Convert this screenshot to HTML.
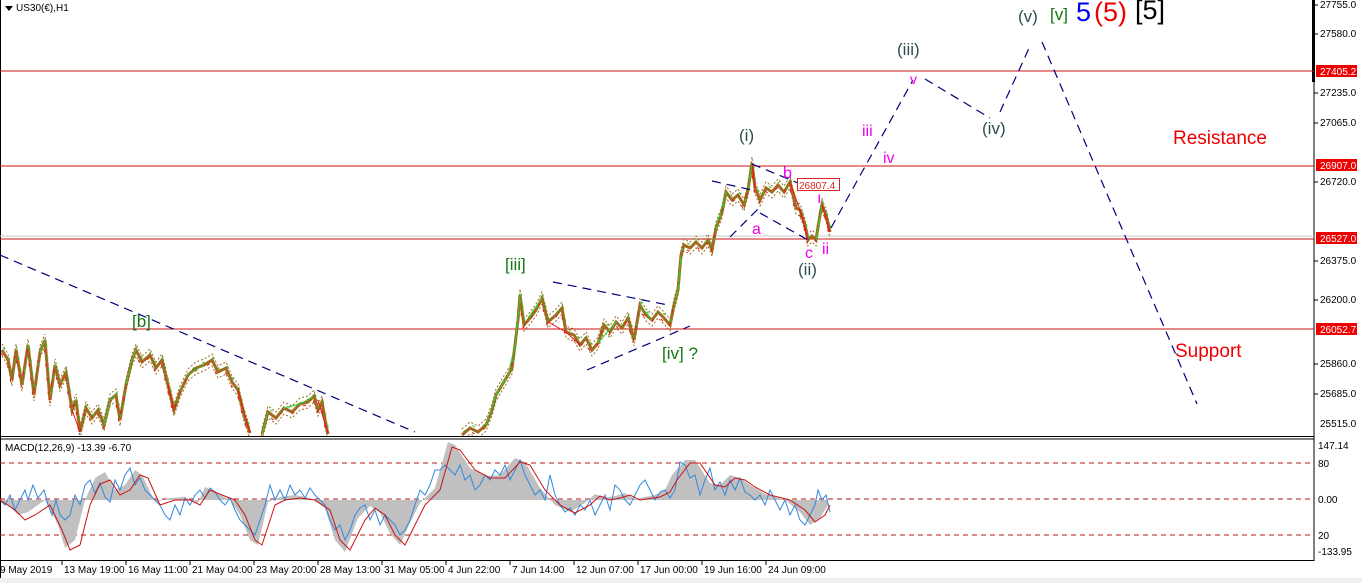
<!DOCTYPE html>
<html><head><meta charset="utf-8"><style>
html,body{margin:0;padding:0;background:#fff;}
body{width:1362px;height:583px;overflow:hidden;position:relative;font-family:"Liberation Sans",Tahoma,sans-serif;}
svg{position:absolute;left:0;top:0;}
</style></head><body>
<svg width="1362" height="583" viewBox="0 0 1362 583" xmlns="http://www.w3.org/2000/svg" font-family="Liberation Sans, sans-serif">
<defs><clipPath id="main"><rect x="1" y="0" width="1312" height="436"/></clipPath></defs>
<rect x="0" y="0" width="1362" height="583" fill="#fff"/>
<rect x="0" y="578" width="1362" height="5" fill="#f0f0f0"/>
<line x1="0.5" y1="0" x2="0.5" y2="578" stroke="#000"/>
<line x1="1314" y1="0" x2="1314" y2="561" stroke="#000"/>
<rect x="1312" y="0" width="3" height="82" fill="#000"/>
<line x1="0" y1="436.5" x2="1314" y2="436.5" stroke="#000"/>
<line x1="0" y1="439" x2="1314" y2="439" stroke="#000"/>
<line x1="0" y1="560.5" x2="1314" y2="560.5" stroke="#000"/>
<line x1="0" y1="71" x2="1314" y2="71" stroke="#cc1111"/>
<line x1="0" y1="166" x2="1314" y2="166" stroke="#cc1111"/>
<line x1="0" y1="236" x2="1314" y2="236" stroke="#c8c8c8"/>
<line x1="0" y1="239" x2="1314" y2="239" stroke="#cc1111"/>
<line x1="0" y1="329" x2="1314" y2="329" stroke="#cc1111"/>
<g fill="none" stroke-linejoin="round">
<path id="p1" d="M2,350 L8,360 L12,380 L16,350 L22,385 L28,345 L34,395 L40,352 L45,340 L50,400 L55,365 L60,385 L66,372 L72,410 L76,400 L80,432 L86,408 L92,418 L98,410 L104,425 L110,400 L116,395 L120,420 L126,385 L132,360 L136,350 L142,362 L150,355 L156,368 L162,360 L168,385 L174,410 L180,392 L188,375 L196,368 L204,365 L212,360 L218,372 L226,368 L232,382 L238,390 L244,415 L250,433"/>
<path id="p2" d="M262,434 L268,412 L276,418 L284,408 L292,412 L300,404 L308,402 L314,396 L318,410 L322,402 L326,425 L328,434"/>
<path id="p3" d="M462,435 L470,428 L478,432 L486,425 L492,410 L496,395 L502,385 L508,375 L512,368 L515,345 L518,320 L520,295 L524,325 L530,318 L536,310 L542,298 L548,322 L556,315 L562,308 L566,332 L574,335 L580,345 L586,338 L592,350 L598,343 L604,325 L610,332 L616,322 L622,328 L628,318 L634,340 L640,305 L646,315 L652,320 L658,312 L664,318 L670,325 L674,305 L678,290 L681,255 L684,245 L690,248 L696,242 L702,248 L708,240 L712,250 L716,228 L722,212 L726,192 L732,200 L738,195 L744,205 L748,190 L752,163 L755,188 L760,200 L766,188 L772,192 L778,185 L784,192 L790,182 L796,208 L800,210 L805,225 L808,240 L812,236 L816,240 L820,215 L822,205 L826,215 L830,232"/>
</g>
<g clip-path="url(#main)" fill="none">
<g stroke="#a06a20" stroke-width="1" stroke-dasharray="2,2">
<use href="#p1" transform="translate(0,-6)"/><use href="#p2" transform="translate(0,-6)"/><use href="#p3" transform="translate(0,-6)"/>
<use href="#p1" transform="translate(0,6)"/><use href="#p2" transform="translate(0,6)"/><use href="#p3" transform="translate(0,6)"/>
</g>
<g stroke="#a06a20" stroke-width="3">
<use href="#p1"/><use href="#p2"/><use href="#p3"/>
</g>
<g stroke="#33cc33" stroke-width="1" stroke-dasharray="3,9">
<use href="#p1" transform="translate(1,-3)"/><use href="#p2" transform="translate(1,-3)"/><use href="#p3" transform="translate(1,-3)"/>
</g>
<g stroke="#ee1111" stroke-width="1" stroke-dasharray="3,11">
<use href="#p1" transform="translate(-1,3)"/><use href="#p2" transform="translate(-1,3)"/><use href="#p3" transform="translate(-1,3)"/>
</g>
</g>
<g fill="none" stroke-width="1">
<path d="M40,352 L45,340 M104,425 L110,400 L116,395 M126,385 L132,360 L136,350 M186,376 L204,365 M262,434 L268,412 M284,408 L300,404 L314,396" stroke="#33cc33"/>
<path d="M72,410 L80,432 M168,385 L174,410 M238,390 L250,433 M318,400 L328,434" stroke="#ee1111"/>
<path d="M486,425 L496,395 L508,375 L515,345 L520,295 M528,318 L542,298 M598,343 L616,322 M640,305 L652,320 M674,305 L678,290 L681,255 M716,228 L726,192 M748,190 L752,163 M816,240 L822,205" stroke="#33cc33"/>
<path d="M548,322 L566,332 L580,345 M752,163 L755,188 M790,182 L800,210 L808,240 M822,205 L830,232" stroke="#ee1111"/>
</g>
<g stroke="#00007a" stroke-width="1.2" fill="none" stroke-dasharray="9,6">
<line x1="0" y1="255" x2="415" y2="432"/>
<line x1="553" y1="282" x2="668" y2="305"/>
<line x1="587" y1="370" x2="690" y2="326"/>
<line x1="712" y1="181" x2="752" y2="190"/>
<line x1="752" y1="164" x2="810" y2="188"/>
<line x1="730" y1="237" x2="762" y2="205"/>
<line x1="760" y1="213" x2="808" y2="240"/>
<line x1="831" y1="228" x2="913" y2="80"/>
<line x1="925" y1="79" x2="990" y2="118"/>
<line x1="1000" y1="112" x2="1030" y2="46"/>
<line x1="1042" y1="42" x2="1197" y2="404"/>
</g>
<g stroke="#b01818" stroke-dasharray="5,4" stroke-width="1">
<line x1="0" y1="463" x2="1314" y2="463"/>
<line x1="0" y1="499" x2="1314" y2="499"/>
<line x1="0" y1="535" x2="1314" y2="535"/>
</g>
<path d="M0,500 L8,505 L18,515 L28,512 L45,500 L58,525 L65,548 L75,540 L85,500 L95,478 L105,472 L115,490 L125,485 L135,470 L142,475 L155,502 L170,498 L185,497 L198,503 L205,487 L215,492 L230,500 L240,515 L250,540 L258,545 L268,502 L280,497 L295,495 L310,498 L325,508 L335,540 L345,552 L358,518 L370,506 L380,513 L390,533 L400,545 L410,523 L420,503 L435,488 L448,442 L455,445 L470,468 L485,476 L500,475 L515,458 L525,462 L540,488 L555,505 L570,512 L585,503 L595,494 L605,498 L615,496 L625,493 L635,499 L655,495 L665,490 L672,475 L685,460 L695,460 L710,483 L720,485 L730,475 L740,478 L750,485 L765,494 L785,500 L800,512 L810,525 L820,518 L828,505 L828,500 L0,500 Z" fill="#c0c0c0"/>
<path d="M0,500 L5,505 L10,495 L15,510 L20,500 L25,490 L28,500 L33,485 L38,498 L44,490 L48,505 L52,515 L56,500 L60,515 L65,520 L70,515 L75,495 L80,505 L85,485 L90,480 L95,493 L100,483 L105,497 L110,502 L115,480 L120,490 L125,475 L130,468 L135,485 L140,478 L145,490 L150,495 L155,500 L160,505 L165,515 L170,520 L175,505 L180,515 L185,498 L190,505 L195,495 L200,490 L205,498 L210,488 L215,492 L220,500 L225,505 L230,498 L235,510 L240,520 L245,525 L250,530 L255,535 L260,520 L265,505 L270,485 L275,500 L280,490 L285,500 L290,485 L295,495 L300,490 L305,498 L310,488 L315,495 L320,500 L325,505 L330,520 L335,530 L340,525 L345,540 L350,530 L355,515 L360,508 L365,505 L370,520 L375,510 L380,525 L385,515 L390,520 L395,525 L400,535 L405,530 L410,520 L415,505 L420,490 L425,495 L430,485 L435,470 L440,470 L445,465 L450,470 L455,475 L460,465 L465,480 L470,475 L475,490 L480,485 L485,475 L490,480 L495,470 L500,475 L505,465 L510,480 L515,470 L520,460 L525,475 L530,485 L535,495 L540,490 L545,500 L550,475 L555,495 L560,505 L565,512 L570,508 L575,515 L580,505 L585,510 L590,500 L595,515 L600,505 L605,495 L610,510 L615,485 L620,490 L625,500 L630,505 L635,495 L640,485 L645,480 L650,490 L655,500 L660,492 L665,490 L670,498 L675,490 L680,462 L685,465 L690,478 L695,475 L700,495 L705,480 L710,468 L715,490 L720,482 L725,495 L730,480 L735,490 L740,478 L745,492 L750,495 L755,500 L760,495 L765,505 L770,490 L775,500 L780,510 L785,500 L790,515 L795,505 L800,520 L805,525 L810,515 L815,505 L818,490 L822,500 L826,495 L830,512" fill="none" stroke="#3388dd" stroke-width="1"/>
<path d="M0,500 L15,510 L25,520 L35,515 L50,505 L62,530 L70,550 L80,545 L90,505 L100,484 L110,480 L120,495 L130,490 L140,475 L148,478 L160,505 L175,500 L190,500 L200,505 L210,490 L222,495 L235,500 L245,515 L255,540 L262,545 L275,505 L285,500 L300,498 L315,500 L330,510 L340,540 L350,550 L365,520 L375,508 L385,515 L395,535 L405,545 L415,525 L425,505 L440,490 L452,447 L460,450 L475,470 L490,478 L505,478 L520,462 L530,465 L545,490 L560,505 L575,513 L590,505 L600,496 L610,500 L620,498 L630,495 L640,500 L660,497 L670,492 L677,480 L690,463 L700,463 L715,485 L725,487 L735,478 L745,480 L755,487 L770,495 L790,500 L805,510 L815,522 L825,515 L830,505" fill="none" stroke="#cc1111" stroke-width="1"/>
<polygon points="5,6 13,6 9,11" fill="#000"/>
<text x="16" y="11" font-size="10" fill="#000">US30(€),H1</text>
<text x="5" y="451" font-size="10" fill="#000">MACD(12,26,9) -13.39 -6.70</text>
<g font-size="10" fill="#000">
<text x="1320" y="8">27755.0</text>
<text x="1320" y="37">27580.0</text>
<text x="1320" y="96">27235.0</text>
<text x="1320" y="126">27065.0</text>
<text x="1320" y="185">26720.0</text>
<text x="1320" y="264">26375.0</text>
<text x="1320" y="303">26200.0</text>
<text x="1320" y="367">25860.0</text>
<text x="1320" y="397">25685.0</text>
<text x="1320" y="427">25515.0</text>
<text x="1318" y="449">147.14</text>
<text x="1318" y="467">80</text>
<text x="1318" y="503">0.00</text>
<text x="1318" y="539">20</text>
<text x="1318" y="555">-133.95</text>
</g>
<g stroke="#000"><line x1="1314" y1="5" x2="1318" y2="5"/><line x1="1314" y1="34" x2="1318" y2="34"/><line x1="1314" y1="93" x2="1318" y2="93"/><line x1="1314" y1="123" x2="1318" y2="123"/><line x1="1314" y1="182" x2="1318" y2="182"/><line x1="1314" y1="261" x2="1318" y2="261"/><line x1="1314" y1="300" x2="1318" y2="300"/><line x1="1314" y1="364" x2="1318" y2="364"/><line x1="1314" y1="394" x2="1318" y2="394"/></g>
<g font-size="10" fill="#fff">
<rect x="1316" y="65" width="41" height="12" fill="#ee0000"/><text x="1320" y="75">27405.2</text>
<rect x="1316" y="159" width="41" height="12" fill="#ee0000"/><text x="1320" y="169">26907.0</text>
<rect x="1316" y="232" width="41" height="12" fill="#ee0000"/><text x="1320" y="242">26527.0</text>
<rect x="1316" y="323" width="41" height="12" fill="#ee0000"/><text x="1320" y="333">26052.7</text>
</g>
<g font-size="10" fill="#000">
<text x="0" y="573">9 May 2019</text>
<text x="64" y="573">13 May 19:00</text>
<text x="128" y="573">16 May 11:00</text>
<text x="192" y="573">21 May 04:00</text>
<text x="256" y="573">23 May 20:00</text>
<text x="320" y="573">28 May 13:00</text>
<text x="384" y="573">31 May 05:00</text>
<text x="448" y="573">4 Jun 22:00</text>
<text x="512" y="573">7 Jun 14:00</text>
<text x="576" y="573">12 Jun 07:00</text>
<text x="640" y="573">17 Jun 00:00</text>
<text x="704" y="573">19 Jun 16:00</text>
<text x="768" y="573">24 Jun 09:00</text>
</g>
<g stroke="#000"><line x1="62" y1="561" x2="62" y2="565"/><line x1="126" y1="561" x2="126" y2="565"/><line x1="190" y1="561" x2="190" y2="565"/><line x1="254" y1="561" x2="254" y2="565"/><line x1="318" y1="561" x2="318" y2="565"/><line x1="382" y1="561" x2="382" y2="565"/><line x1="446" y1="561" x2="446" y2="565"/><line x1="510" y1="561" x2="510" y2="565"/><line x1="574" y1="561" x2="574" y2="565"/><line x1="638" y1="561" x2="638" y2="565"/><line x1="702" y1="561" x2="702" y2="565"/><line x1="766" y1="561" x2="766" y2="565"/></g>
<g font-size="17" fill="#2f4f4f">
<text x="739" y="141">(i)</text>
<text x="798" y="275">(ii)</text>
<text x="897" y="55">(iii)</text>
<text x="982" y="134">(iv)</text>
<text x="1018" y="22">(v)</text>
</g>
<g font-size="16" fill="#ee00ee">
<text x="783" y="178">b</text>
<text x="817" y="203">ı</text>
<text x="752" y="234">a</text>
<text x="805" y="258">c</text>
<text x="822" y="254">ii</text>
<text x="862" y="136">iii</text>
<text x="883" y="163">iv</text>
<text x="910" y="84" font-size="14">v</text>
</g>
<rect x="797.5" y="178.5" width="42" height="12" fill="#fff" stroke="#dd2222"/>
<text x="799" y="189" font-size="10" fill="#dd2222">26807.4</text>
<g font-size="17" fill="#117711">
<text x="505" y="270">[iii]</text>
<text x="132" y="327">[b]</text>
<text x="662" y="359">[iv] ?</text>
<text x="1050" y="20">[v]</text>
</g>
<text x="1076" y="21" font-size="27" fill="#0000ee">5</text>
<text x="1094" y="21" font-size="27" fill="#ee0000">(5)</text>
<text x="1135" y="19" font-size="27" fill="#000">[5]</text>
<text x="1173" y="144" font-size="19" fill="#ee0000">Resistance</text>
<text x="1175" y="357" font-size="19" fill="#ee0000">Support</text>
</svg>
</body></html>
